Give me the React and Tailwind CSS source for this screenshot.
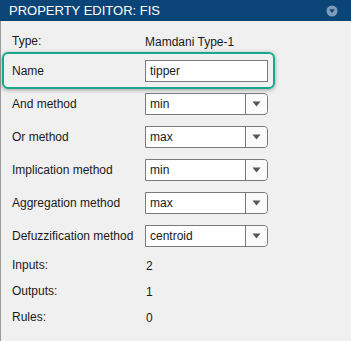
const font = { fontFamily: '"Liberation Sans", Arial, sans-serif' };

const Dropdown = ({ value }) => (
  <div className="flex h-[22px] w-[123px] border border-[#7a7a7a] rounded-r-[4px] bg-white">
    <div className="flex-1 flex items-center pl-[4px] text-[12px] text-[#1a1a1a]">{value}</div>
    <div className="w-[22px] border-l border-[#7a7a7a] flex items-center justify-center rounded-r-[4px] bg-[#fafafa]">
      <svg width="9" height="6" viewBox="0 0 9 6">
        <path d="M0.5 0.5 L8.5 0.5 L4.5 5.5 Z" fill="#555" />
      </svg>
    </div>
  </div>
);

const Row = ({ label, children, h = "h-[22px]" }) => (
  <div className={`flex items-center ${h}`}>
    <div className="w-[133px] shrink-0 pl-[11px] text-[12px] text-[#1a1a1a] whitespace-nowrap">{label}</div>
    <div className="flex-1">{children}</div>
  </div>
);

export default function App() {
  const methods = [
    ["And method", "min"],
    ["Or method", "max"],
    ["Implication method", "min"],
    ["Aggregation method", "max"],
    ["Defuzzification method", "centroid"],
  ];

  return (
    <div className="w-[351px] h-[341px] bg-[#f0f0f0] flex flex-col overflow-hidden" style={font}>
      {/* header */}
      <div className="h-[21px] bg-[#0b4476] flex items-center justify-between pl-[9px] pr-[13px]">
        <span className="text-white text-[13px] leading-none">PROPERTY EDITOR: FIS</span>
        <svg width="12" height="12" viewBox="0 0 12 12">
          <circle cx="6" cy="6" r="5.5" fill="#7f9cbb" />
          <path d="M3.2 4.3 L8.8 4.3 L6 8 Z" fill="#0b4476" />
        </svg>
      </div>

      <div className="flex-1 border-l border-[#9a9a9a] pt-[9px] flex flex-col">
        <Row label="Type:">
          <span className="pl-[11px] text-[12px] text-[#1a1a1a]">Mamdani Type-1</span>
        </Row>

        {/* selected name row */}
        <div className="ml-[1px] w-[273px] h-[37px] border-2 border-[#17a88a] rounded-[6px] shadow-[0_1px_4px_rgba(0,0,0,0.35)] flex items-center">
          <div className="w-[141px] pl-[8px] text-[12px] text-[#1a1a1a]">Name</div>
          <div className="w-[123px] h-[22px] border border-[#7a7a7a] bg-white flex items-center pl-[4px] text-[12px] text-[#1a1a1a]">
            tipper
          </div>
        </div>

        <div className="mt-[4px] flex flex-col gap-[11px]">
          {methods.map(([label, value]) => (
            <Row key={label} label={label}>
              <div className="pl-[11px]">
                <Dropdown value={value} />
              </div>
            </Row>
          ))}
        </div>

        <div className="mt-[5px] flex flex-col">
          {[
            ["Inputs:", "2"],
            ["Outputs:", "1"],
            ["Rules:", "0"],
          ].map(([label, value]) => (
            <Row key={label} label={label} h="h-[26px]">
              <span className="pl-[12px] text-[12px] text-[#1a1a1a]">{value}</span>
            </Row>
          ))}
        </div>
      </div>
    </div>
  );
}
